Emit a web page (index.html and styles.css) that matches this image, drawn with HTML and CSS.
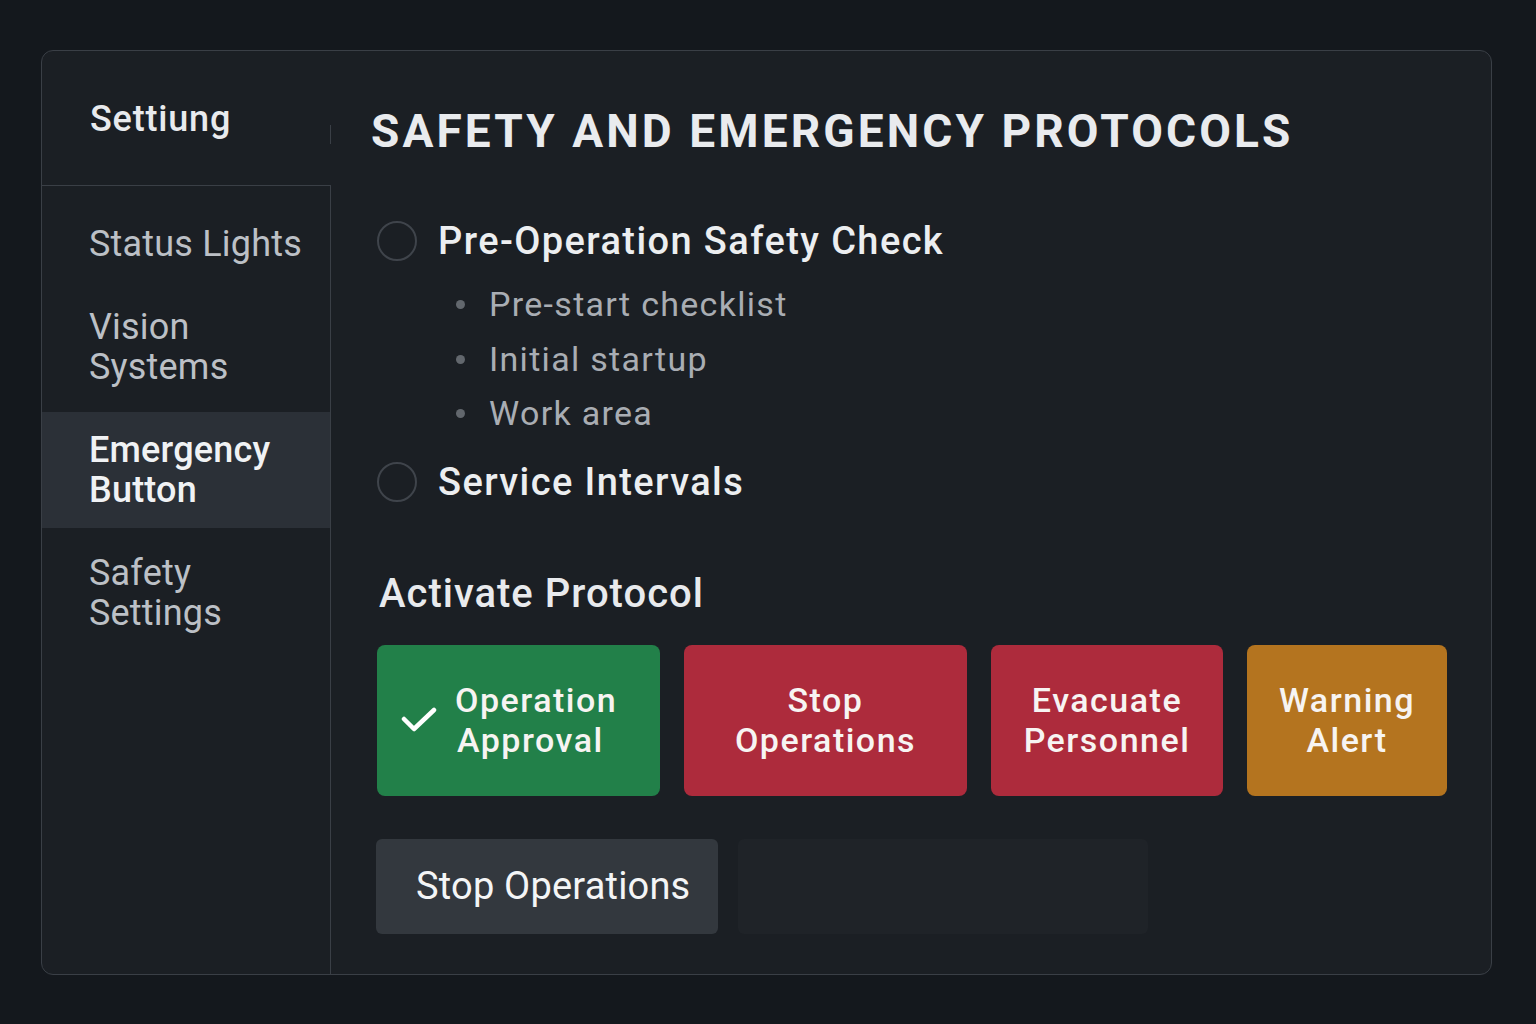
FILE: index.html
```html
<!DOCTYPE html>
<html lang="en">
<head>
<meta charset="utf-8">
<title>Safety and Emergency Protocols</title>
<link rel="stylesheet" href="styles.css">
</head>
<body>
<div class="card">
  <aside class="sidebar">
    <div class="side-head"><span class="side-title">Settiung</span></div>
    <nav class="side-list">
      <div class="side-item">Status Lights</div>
      <div class="side-item">Vision<br>Systems</div>
      <div class="side-item active">Emergency<br>Button</div>
      <div class="side-item">Safety<br>Settings</div>
    </nav>
  </aside>
  <main class="main">
    <h1 class="title">SAFETY AND EMERGENCY PROTOCOLS</h1>
    <div class="radio-row first">
      <span class="radio"></span>
      <span class="radio-label">Pre-Operation Safety Check</span>
    </div>
    <ul class="sublist">
      <li>Pre-start checklist</li>
      <li>Initial startup</li>
      <li>Work area</li>
    </ul>
    <div class="radio-row">
      <span class="radio"></span>
      <span class="radio-label">Service Intervals</span>
    </div>
    <h2 class="section">Activate Protocol</h2>
    <div class="actions">
      <button class="act green">
        <svg class="check" width="36" height="28" viewBox="0 0 36 28"><polyline points="3,13 13,23 33,4" fill="none" stroke="#ffffff" stroke-width="4.5" stroke-linecap="round" stroke-linejoin="round"/></svg>
        <span class="act-text left">Operation<br><span class="indent">Approval</span></span>
      </button>
      <button class="act red w1"><span class="act-text">Stop<br>Operations</span></button>
      <button class="act red w2"><span class="act-text">Evacuate<br>Personnel</span></button>
      <button class="act orange"><span class="act-text">Warning<br>Alert</span></button>
    </div>
    <div class="bottom-row">
      <button class="stop-btn">Stop Operations</button>
      <div class="empty-box"></div>
    </div>
  </main>
</div>
</body>
</html>
```

FILE: styles.css
```css
* { box-sizing: border-box; }
html, body { margin: 0; }
body {
  width: 1536px;
  height: 1024px;
  background: #14181d;
  padding: 50px 44px 49px 41px;
  font-family: Roboto, "Liberation Sans", sans-serif;
  overflow: hidden;
}
.card {
  display: flex;
  height: 925px;
  background: #1b1f24;
  border: 1px solid #3a3f46;
  border-radius: 12px;
  overflow: hidden;
}
.sidebar {
  width: 289px;
  flex: none;
  display: flex;
  flex-direction: column;
}
.side-head {
  height: 135px;
  border-bottom: 1px solid #3a3f46;
  padding: 48px 0 0 48px;
  position: relative;
}
.side-head::after {
  content: "";
  position: absolute;
  right: 0;
  top: 74px;
  width: 1px;
  height: 19px;
  background: #3a3f46;
}
.side-title {
  font-size: 36px;
  line-height: 40px;
  font-weight: 500;
  color: #e8eaed;
  letter-spacing: 0.8px;
}
.side-list {
  flex: 1;
  border-right: 1px solid #3a3f46;
  padding-top: 20px;
  display: flex;
  flex-direction: column;
  gap: 7px;
}
.side-item {
  padding: 18px 0 18px 47px;
  font-size: 36px;
  line-height: 40px;
  color: #bcc0c6;
  letter-spacing: 0.2px;
}
.side-item.active {
  background: #2b3037;
  color: #f0f2f4;
  font-weight: 500;
}
.main {
  flex: 1;
  padding: 52px 0 0 40px;
}
.title {
  margin: 0;
  font-size: 46px;
  line-height: 56px;
  font-weight: 700;
  letter-spacing: 3.1px;
  color: #e9ebee;
}
.radio-row {
  display: flex;
  align-items: center;
  height: 44px;
  margin-left: 6px;
  gap: 21px;
}
.radio-row.first { margin-top: 60px; }
.radio {
  width: 40px;
  height: 40px;
  border-radius: 50%;
  border: 2px solid #3f444b;
  flex: none;
}
.radio-label {
  font-size: 38px;
  font-weight: 500;
  letter-spacing: 1.4px;
  color: #eceef0;
}
.sublist {
  list-style: none;
  margin: 14px 0 19px 0;
  padding: 0 0 0 118px;
}
.sublist li {
  position: relative;
  font-size: 34px;
  line-height: 54.5px;
  letter-spacing: 1.3px;
  color: #a9adb3;
}
.sublist li::before {
  content: "";
  position: absolute;
  left: -33px;
  top: 23px;
  width: 9px;
  height: 9px;
  border-radius: 50%;
  background: #62676d;
}
.section {
  margin: 66px 0 0 8px;
  font-size: 40px;
  line-height: 48px;
  font-weight: 500;
  letter-spacing: 1px;
  color: #e8eaed;
}
.actions {
  display: flex;
  gap: 24px;
  margin: 27px 0 0 6px;
}
.act {
  height: 151px;
  border: none;
  border-radius: 8px;
  display: flex;
  align-items: center;
  justify-content: center;
  font-family: inherit;
  font-size: 34px;
  line-height: 40px;
  font-weight: 500;
  letter-spacing: 1.5px;
  color: #f7f4f2;
  padding: 0;
}
.act-text { text-align: center; }
.act-text.left { text-align: left; }
.indent { padding-left: 2px; }
.green {
  width: 283px;
  background: #228049;
  justify-content: flex-start;
  padding-left: 24px;
  gap: 18px;
}
.red { background: #ad2b3c; }
.w1 { width: 283px; }
.w2 { width: 232px; }
.orange { width: 200px; background: #b4741f; }
.check { flex: none; }
.bottom-row {
  display: flex;
  gap: 20px;
  margin: 43px 0 0 5px;
}
.stop-btn {
  width: 342px;
  height: 95px;
  background: #33383e;
  border: none;
  border-radius: 6px;
  font-family: inherit;
  font-size: 38px;
  font-weight: 400;
  letter-spacing: 0.2px;
  color: #f4f5f6;
  text-align: left;
  padding: 0 0 0 40px;
}
.empty-box {
  width: 410px;
  height: 95px;
  background: #1f2328;
  border-radius: 6px;
}
```
